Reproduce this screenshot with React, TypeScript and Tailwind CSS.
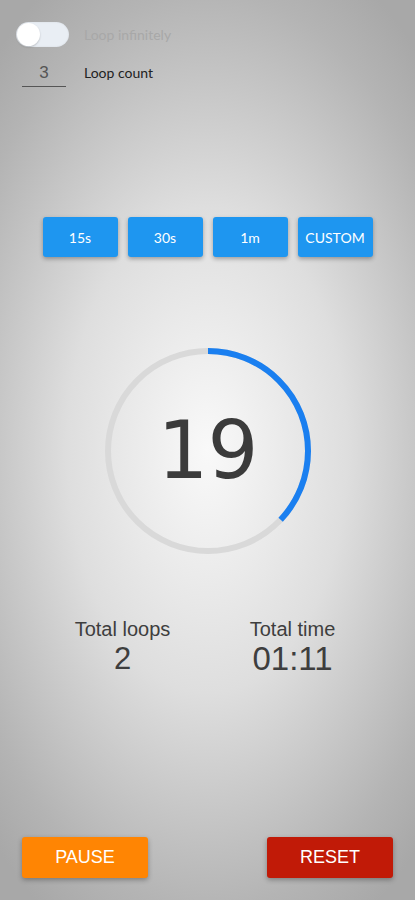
const presets = ["15s", "30s", "1m", "CUSTOM"];

function ProgressRing({ value, fraction }: { value: number; fraction: number }) {
  const r = 100;
  const c = 2 * Math.PI * r;
  return (
    <div className="relative w-[212px] h-[212px]">
      <svg width="212" height="212" viewBox="0 0 212 212" className="-rotate-90">
        <circle cx="106" cy="106" r={r} fill="none" stroke="#d9d9d9" strokeWidth="6" />
        <circle
          cx="106"
          cy="106"
          r={r}
          fill="none"
          stroke="#1a7ff0"
          strokeWidth="6"
          strokeDasharray={`${c * fraction} ${c}`}
        />
      </svg>
      <div className="absolute inset-0 flex items-center justify-center">
        <span className="text-[80px] leading-none text-[#3b3b3b] font-['DejaVu_Sans',sans-serif] font-normal tracking-[-1px]">
          {value}
        </span>
      </div>
    </div>
  );
}

export default function App() {
  return (
    <div className="w-[415px] h-[900px] flex flex-col bg-[radial-gradient(ellipse_75%_60%_at_50%_50%,#f9f9f9_0%,#dedede_45%,#b4b4b4_85%,#a8a8a8_100%)] font-['Lato',sans-serif] overflow-hidden">
      {/* Settings */}
      <div className="flex flex-col pt-[22px] pl-4 gap-[16px]">
        <div className="flex items-center gap-[15px]">
          <div className="w-[53px] h-[25px] rounded-full bg-[#e9eef4] flex items-center px-[1px] shadow-[inset_0_0_2px_rgba(0,0,0,0.1)]">
            <div className="w-[23px] h-[23px] rounded-full bg-white shadow-[0_1px_2px_rgba(0,0,0,0.2)]" />
          </div>
          <span className="text-[14px] text-[#a8a8a8]">Loop infinitely</span>
        </div>
        <div className="flex items-center gap-[18px] pl-[6px]">
          <div className="w-11 border-b border-[#555] text-center text-[17px] text-[#555] pb-[3px] leading-5 font-['Liberation_Sans',sans-serif]">
            3
          </div>
          <span className="text-[14px] text-[#222] -mt-[6px]">Loop count</span>
        </div>
      </div>

      {/* Presets */}
      <div className="flex justify-center gap-[10px] mt-[130px]">
        {presets.map((p) => (
          <button
            key={p}
            className="w-[75px] h-10 rounded-[3px] bg-[#1e96f0] text-white text-[14px] shadow-[0_2px_4px_rgba(0,0,0,0.3)]"
          >
            {p}
          </button>
        ))}
      </div>

      {/* Timer */}
      <div className="flex justify-center mt-[88px]">
        <ProgressRing value={19} fraction={0.37} />
      </div>

      {/* Totals */}
      <div className="flex justify-center gap-[66px] mt-[60px] font-['Liberation_Sans',sans-serif] text-[#3e3e3e]">
        <div className="flex flex-col items-center w-[104px]">
          <span className="text-[20px] leading-6">Total loops</span>
          <span className="text-[31px] leading-9">2</span>
        </div>
        <div className="flex flex-col items-center w-[104px]">
          <span className="text-[20px] leading-6">Total time</span>
          <span className="text-[33px] leading-9">01:11</span>
        </div>
      </div>

      {/* Actions */}
      <div className="mt-auto mb-[22px] flex justify-between px-[22px] font-['Liberation_Sans',sans-serif]">
        <button className="w-[126px] h-[41px] rounded-[3px] bg-[#ff8503] text-white text-[18px] shadow-[0_2px_5px_rgba(0,0,0,0.3)]">
          PAUSE
        </button>
        <button className="w-[126px] h-[41px] rounded-[3px] bg-[#c11a07] text-white text-[18px] shadow-[0_2px_5px_rgba(0,0,0,0.3)]">
          RESET
        </button>
      </div>
    </div>
  );
}
